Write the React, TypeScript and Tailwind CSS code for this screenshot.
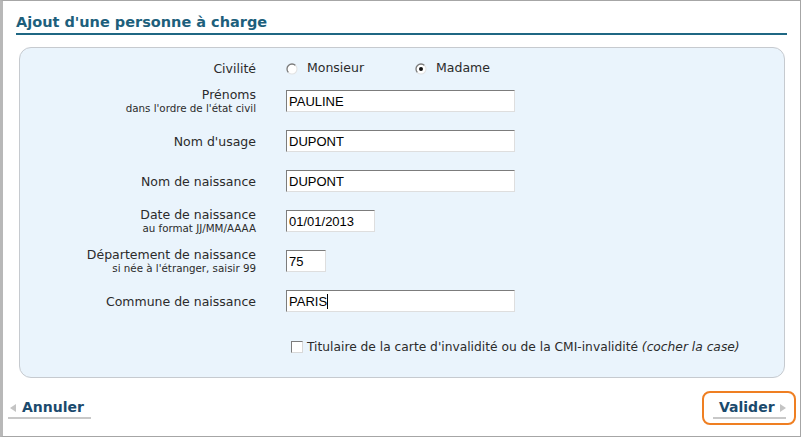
import React from "react";

const font = { fontFamily: '"DejaVu Sans", Verdana, sans-serif' };

function Radio({ checked }: { checked?: boolean }) {
  return (
    <svg width="12" height="12" viewBox="0 0 12 12" className="shrink-0">
      <circle cx="6" cy="6" r="5" fill="#ffffff" />
      <path d="M2.46 9.54 A5 5 0 0 1 9.54 2.46" fill="none" stroke="#7a7a7a" strokeWidth="1.3" />
      <path d="M9.54 2.46 A5 5 0 0 1 2.46 9.54" fill="none" stroke="#e2e2e2" strokeWidth="1.1" />
      {checked && <circle cx="6" cy="6" r="2" fill="#111" />}
    </svg>
  );
}

function Field({ value, width, caret }: { value: string; width: string; caret?: boolean }) {
  return (
    <div
      className={`${width} h-[22px] bg-white border-t border-l border-t-[#7c7c7c] border-l-[#7c7c7c] border-b border-r border-b-[#dedede] border-r-[#dedede] flex items-center pl-[2px] text-[13px] text-black leading-none`}
      style={{ fontFamily: '"Liberation Sans", Arial, sans-serif' }}
    >
      <span>{value}</span>
      {caret && <span className="w-px h-[15px] bg-black" />}
    </div>
  );
}

function Label({ main, sub }: { main: string; sub?: string }) {
  return (
    <div className="w-[236px] shrink-0 flex flex-col items-end text-right text-[#2b2b2b]">
      <div className="text-[12.5px] leading-[15px]">{main}</div>
      {sub && <div className="text-[10.3px] leading-[13px]">{sub}</div>}
    </div>
  );
}

function Row({ main, sub, children }: { main: string; sub?: string; children: React.ReactNode }) {
  return (
    <div className="h-[40px] flex items-center gap-[30px]">
      <Label main={main} sub={sub} />
      {children}
    </div>
  );
}

export default function App() {
  return (
    <div className="w-[802px] h-[439px] bg-white" style={font}>
      <div className="w-[801px] h-[437px] border-l-[3px] border-l-[#b8b8b8] border-t border-r border-b border-t-[#a6a6a6] border-r-[#a6a6a6] border-b-[#a6a6a6] flex flex-col">
        <div className="pl-[13px] pr-[13px]">
          <div className="pt-[11px] pb-[1px] border-b-2 border-[#1f6783]">
            <h1 className="text-[14.5px] leading-[20px] font-bold text-[#1d5f7c]">Ajout d'une personne à charge</h1>
          </div>
          <div className="mt-[12px] ml-[3px] mr-[2px] h-[331px] bg-[#eaf4fc] border border-[#c6cacf] rounded-[12px] pt-[8px] text-[#2b2b2b]">
            <div className="h-[25px] flex items-center gap-[30px]">
              <Label main="Civilité" />
              <div className="flex items-center text-[12.5px]">
                <div className="w-[129px] flex items-center gap-[9px]">
                  <Radio />
                  <span>Monsieur</span>
                </div>
                <div className="flex items-center gap-[9px]">
                  <Radio checked />
                  <span>Madame</span>
                </div>
              </div>
            </div>
            <Row main="Prénoms" sub="dans l'ordre de l'état civil">
              <Field value="PAULINE" width="w-[229px]" />
            </Row>
            <Row main="Nom d'usage">
              <Field value="DUPONT" width="w-[229px]" />
            </Row>
            <Row main="Nom de naissance">
              <Field value="DUPONT" width="w-[229px]" />
            </Row>
            <Row main="Date de naissance" sub="au format JJ/MM/AAAA">
              <Field value="01/01/2013" width="w-[89px]" />
            </Row>
            <Row main="Département de naissance" sub="si née à l'étranger, saisir 99">
              <Field value="75" width="w-[40px]" />
            </Row>
            <Row main="Commune de naissance">
              <Field value="PARIS" width="w-[229px]" caret />
            </Row>
            <div className="mt-[16px] h-[20px] flex items-center pl-[271px] gap-[4px] text-[12.25px]">
              <span className="w-[12px] h-[12px] bg-white border-t border-l border-t-[#7c7c7c] border-l-[#7c7c7c] border-b border-r border-b-[#d8d8d8] border-r-[#d8d8d8]" />
              <span>
                Titulaire de la carte d'invalidité ou de la CMI-invalidité <i>(cocher la case)</i>
              </span>
            </div>
          </div>
        </div>
        <div className="flex justify-between items-start mt-[13px] pl-[5px] pr-[4px]">
          <div className="pt-[8px]">
            <div className="flex items-center pl-[2px] pr-[7px] pb-[1px] border-b-2 border-[#c8c8c8]">
              <span className="w-0 h-0 border-y-[4px] border-y-transparent border-r-[6px] border-r-[#c4c4c4] mr-[6px]" />
              <span className="text-[14px] leading-[17px] font-bold text-[#1b4a6d]">Annuler</span>
            </div>
          </div>
          <div className="w-[94px] h-[34px] border-2 border-[#ef7f22] rounded-[8px] pt-[6px] pl-[9px] pr-[8px]">
            <div className="flex items-center pl-[6px] pb-[1px] border-b-2 border-[#c8c8c8]">
              <span className="text-[14px] leading-[17px] font-bold text-[#1b4a6d]">Valider</span>
              <span className="w-0 h-0 border-y-[4px] border-y-transparent border-l-[6px] border-l-[#c4c4c4] ml-[5px]" />
            </div>
          </div>
        </div>
      </div>
    </div>
  );
}
